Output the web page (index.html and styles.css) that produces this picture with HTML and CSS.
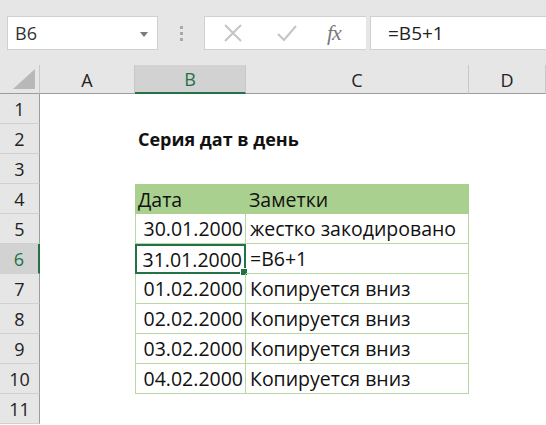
FILE: index.html
```html
<!DOCTYPE html>
<html>
<head>
<meta charset="utf-8">
<link rel="stylesheet" href="styles.css">
</head>
<body>
<div class="toolbar">
  <div class="namebox"><span class="nb-text">B6</span><svg class="nb-arrow" width="8" height="5" viewBox="0 0 8 5"><path d="M0 0h8L4 5z" fill="#7a7a7a"/></svg></div>
  <div class="dots"><i></i><i></i><i></i></div>
  <div class="fbtns">
    <svg class="ico" width="20" height="20" viewBox="0 0 20 20"><path d="M2 2L18 18M18 2L2 18" stroke="#c4c4c4" stroke-width="2" fill="none"/></svg>
    <svg class="ico" width="22" height="20" viewBox="0 0 22 20"><path d="M2 11L8 17L20 3" stroke="#c4c4c4" stroke-width="2" fill="none"/></svg>
    <span class="fx">fx</span>
  </div>
  <div class="finput">=B5+1</div>
</div>
<div class="sheet">
  <div class="corner"><svg width="32" height="20" viewBox="0 0 32 20"><path d="M32 0V20H10z" fill="#b8b8b8"/></svg></div>
  <div class="ch">A</div><div class="ch sel">B</div><div class="ch">C</div><div class="ch">D</div>

  <div class="rh">1</div><div class="c"></div><div class="c"></div><div class="c"></div><div class="c"></div>
  <div class="rh">2</div><div class="c"></div><div class="c title">Серия дат в день</div><div class="c"></div><div class="c"></div>
  <div class="rh">3</div><div class="c"></div><div class="c"></div><div class="c"></div><div class="c"></div>
  <div class="rh">4</div><div class="c"></div><div class="c hd">Дата</div><div class="c hd hd2">Заметки</div><div class="c"></div>
  <div class="rh">5</div><div class="c"></div><div class="c tb num">30.01.2000</div><div class="c tb tc">жестко закодировано</div><div class="c"></div>
  <div class="rh sel">6</div><div class="c"></div><div class="c tb num active">31.01.2000<span class="handle"></span></div><div class="c tb tc">=B6+1</div><div class="c"></div>
  <div class="rh">7</div><div class="c"></div><div class="c tb num">01.02.2000</div><div class="c tb tc">Копируется вниз</div><div class="c"></div>
  <div class="rh">8</div><div class="c"></div><div class="c tb num">02.02.2000</div><div class="c tb tc">Копируется вниз</div><div class="c"></div>
  <div class="rh">9</div><div class="c"></div><div class="c tb num">03.02.2000</div><div class="c tb tc">Копируется вниз</div><div class="c"></div>
  <div class="rh">10</div><div class="c"></div><div class="c tb num">04.02.2000</div><div class="c tb tc">Копируется вниз</div><div class="c"></div>
  <div class="rh">11</div><div class="c"></div><div class="c"></div><div class="c"></div><div class="c"></div>
</div>
</body>
</html>
```
FILE: styles.css
```css
* { box-sizing: border-box; }
html, body { margin: 0; padding: 0; background: #fff; }
body {
  width: 546px; height: 425px; overflow: hidden;
  font-family: "Open Sans", "Noto Sans", sans-serif;
  color: #111;
}
.toolbar {
  height: 65px; background: #e6e6e6;
  display: flex; align-items: flex-start;
  padding-top: 16px; padding-left: 7px;
}
.namebox {
  width: 151px; height: 34px; background: #fff;
  border: 1px solid #d0d0d0;
  display: flex; align-items: center; justify-content: space-between;
  padding: 0 9px 0 7px;
  font-size: 18px; color: #333;
}
.nb-arrow { margin-top: 2px; }
.dots {
  width: 46px; height: 34px;
  display: flex; flex-direction: column; align-items: center; justify-content: center; gap: 3px;
}
.dots i { display: block; width: 3px; height: 3px; background: #a8a8a8; }
.fbtns {
  width: 162px; height: 34px; background: #fff;
  border: 1px solid #d0d0d0; border-right: none;
  display: flex; align-items: center;
  padding-left: 18px; gap: 0;
}
.fbtns .ico:nth-child(1) { margin-right: 33px; }
.fbtns .ico:nth-child(2) { margin-right: 29px; }
.fx {
  font-family: "Liberation Serif", serif; font-style: italic;
  font-size: 22px; color: #7a7a7a; letter-spacing: -1px;
}
.finput {
  flex: 1; height: 34px; background: #fff; margin-left: 4px;
  border: 1px solid #d0d0d0; border-right: none;
  display: flex; align-items: center; padding-left: 17px;
  font-size: 19px; color: #222;
}
.sheet {
  display: grid;
  grid-template-columns: 40px 95px 111px 223px 77px;
  grid-template-rows: 29px repeat(11, 30px);
}
.corner {
  background: #e6e6e6; border-right: 1px solid #c8c8c8; border-bottom: 1px solid #9c9c9c;
  display: flex; align-items: flex-end; justify-content: flex-end; padding: 0 4px 4px 0;
}
.ch {
  background: #e6e6e6; border-right: 1px solid #c8c8c8; border-bottom: 1px solid #9c9c9c;
  display: flex; align-items: center; justify-content: center;
  font-size: 18px; color: #222; padding-top: 1px;
}
.ch.sel { background: #d2d2d2; color: #217346; border-bottom: 2px solid #217346; }
.rh {
  background: #e6e6e6; border-right: 1px solid #9c9c9c; border-bottom: 1px solid #d0d0d0;
  display: flex; align-items: center; justify-content: center;
  font-size: 18px; color: #222;
}
.rh.sel { background: #d2d2d2; color: #217346; border-right: 2px solid #217346; }
.c {
  display: flex; align-items: center; font-size: 19.5px; white-space: nowrap; overflow: visible;
  padding-left: 3px; position: relative;
}
.title { font-weight: bold; padding-left: 3px; font-size: 18px; }
.hd { background: #a9d08e; border-right: 1px solid #a9d08e; padding-left: 3px; }
.hd2 { border-right: none; }
.tb { border-bottom: 1px solid #b8d7a3; }
.num { justify-content: flex-end; padding-right: 2px; border-left: 1px solid #b8d7a3; border-right: 1px solid #b8d7a3; }
.tc { border-right: 1px solid #b8d7a3; padding-left: 4px; }
.active { border: 2px solid #217346; }
.handle {
  position: absolute; right: -4px; bottom: -4px; width: 6px; height: 6px;
  background: #217346; border: 1px solid #fff; box-sizing: content-box;
}
```
